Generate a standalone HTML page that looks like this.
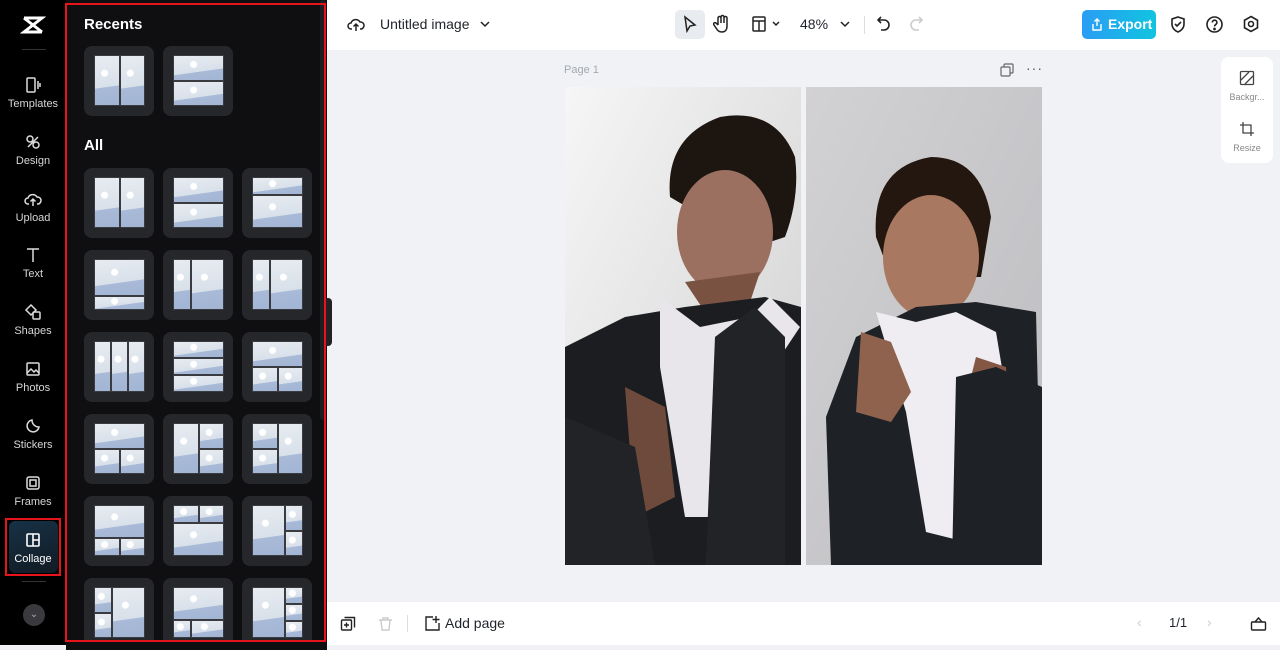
<!DOCTYPE html>
<html><head><meta charset="utf-8"><style>
*{box-sizing:border-box;margin:0;padding:0}
body{width:1280px;height:645px;overflow:hidden;font-family:"Liberation Sans",sans-serif;background:#f0f2f5;position:relative}
.rail{position:absolute;left:0;top:0;width:66px;height:645px;background:#000}
.ri{position:absolute;left:0;width:66px;text-align:center;color:#d6d6d8;font-size:11px}
.ri svg{display:block;margin:0 auto 4px}
.panel{position:absolute;left:66px;top:0;width:261px;height:645px;background:#0f0f12}
.red{position:absolute;border:2px solid #e8141c}
.h{position:absolute;left:84px;color:#fff;font-weight:bold;font-size:15px}
.card{position:absolute;width:70px;height:70px;background:#26272b;border-radius:8px}
.img{position:absolute;left:10px;top:9px;width:51px;height:51px;background:#3a3b40;display:grid;gap:2px;padding:1px}
.c{background:radial-gradient(circle at 40% 35%,#fff 0,#fff 3px,transparent 4px),linear-gradient(172deg,#e7ecf1 0%,#d8e0ea 62%,#a8bad7 63%,#a2b5d4 100%)}
.top{position:absolute;left:327px;top:0;width:953px;height:50px;background:#fff}
.bot{position:absolute;left:327px;top:602px;width:953px;height:43px;background:#fff}
.t{position:absolute;font-size:14px;color:#1f2329}
</style></head><body>
<div class="rail">
 <div class="ri" style="top:12px"><svg width="26" height="26" viewBox="0 0 26 26"><path d="M4 6h18L4 20h18" stroke="#fff" stroke-width="3" fill="none"/><path d="M4 6L22 20" stroke="#fff" stroke-width="3"/></svg></div>
 <div style="position:absolute;left:22px;top:49px;width:24px;height:1px;background:#333"></div>
 <div class="ri" style="top:76px"><svg width="18" height="18" viewBox="0 0 18 18" fill="none" stroke="#ddd" stroke-width="1.5"><rect x="3" y="2" width="8" height="14" rx="1"/><path d="M14 5v8M16 7v4"/></svg>Templates</div>
 <div class="ri" style="top:133px"><svg width="18" height="18" viewBox="0 0 18 18" fill="none" stroke="#ddd" stroke-width="1.5"><circle cx="6" cy="6" r="3"/><circle cx="12" cy="12" r="3"/><path d="M4 14L14 4"/></svg>Design</div>
 <div class="ri" style="top:190px"><svg width="18" height="18" viewBox="0 0 18 18" fill="none" stroke="#ddd" stroke-width="1.5"><path d="M5 14H4a3 3 0 010-6 5 5 0 019-1 3.5 3.5 0 011 7h-1M9 16V9M6.5 11.5L9 9l2.5 2.5"/></svg>Upload</div>
 <div class="ri" style="top:246px"><svg width="18" height="18" viewBox="0 0 18 18" fill="none" stroke="#ddd" stroke-width="1.5"><path d="M3 3h12M9 3v13"/></svg>Text</div>
 <div class="ri" style="top:303px"><svg width="18" height="18" viewBox="0 0 18 18" fill="none" stroke="#ddd" stroke-width="1.5"><path d="M7 2l5 5-5 5-5-5z"/><rect x="9" y="9" width="7" height="7" rx="1"/></svg>Shapes</div>
 <div class="ri" style="top:360px"><svg width="18" height="18" viewBox="0 0 18 18" fill="none" stroke="#ddd" stroke-width="1.5"><rect x="3" y="3" width="12" height="12" rx="1"/><path d="M3 13l4-4 3 3 2-2 3 3"/></svg>Photos</div>
 <div class="ri" style="top:417px"><svg width="18" height="18" viewBox="0 0 18 18" fill="none" stroke="#ddd" stroke-width="1.5"><path d="M15 10A6 6 0 118 3c0 4 3 7 7 7z"/></svg>Stickers</div>
 <div class="ri" style="top:474px"><svg width="18" height="18" viewBox="0 0 18 18" fill="none" stroke="#ddd" stroke-width="1.5"><rect x="3" y="3" width="12" height="12" rx="2"/><rect x="6" y="6" width="6" height="6"/></svg>Frames</div>
 <div style="position:absolute;left:9px;top:521px;width:49px;height:52px;border-radius:6px;background:linear-gradient(160deg,#173246,#111a24)"></div>
 <div class="ri" style="top:531px;color:#fff"><svg width="18" height="18" viewBox="0 0 18 18" fill="none" stroke="#fff" stroke-width="1.6"><rect x="3" y="3" width="12" height="12" rx="1"/><path d="M9 3v12M9 9h6"/></svg>Collage</div>
 <div class="red" style="left:5px;top:518px;width:56px;height:58px"></div>
 <div style="position:absolute;left:22px;top:581px;width:24px;height:1px;background:#333"></div>
 <div style="position:absolute;left:23px;top:604px;width:22px;height:22px;border-radius:50%;background:#3a3a3e;color:#aaa;font-size:10px;text-align:center;line-height:22px">⌄</div>
</div>
<div class="panel"></div>
<div style="position:absolute;left:320px;top:0;width:6px;height:420px;background:#1e1e22;border-radius:3px"></div>
<div style="position:absolute;left:324px;top:298px;width:8px;height:48px;background:#222;border-radius:4px"></div>
<div class="h" style="top:16px">Recents</div>
<div class="h" style="top:137px">All</div>

<div class="card" style="left:84px;top:46px"><div class="img" style="grid-template-columns:1fr 1fr"><div class="c"></div><div class="c"></div></div></div>
<div class="card" style="left:163px;top:46px"><div class="img" style="grid-template-rows:1fr 1fr"><div class="c"></div><div class="c"></div></div></div>

<div class="card" style="left:84px;top:168px"><div class="img" style="grid-template-columns:1fr 1fr"><div class="c"></div><div class="c"></div></div></div>
<div class="card" style="left:163px;top:168px"><div class="img" style="grid-template-rows:1fr 1fr"><div class="c"></div><div class="c"></div></div></div>
<div class="card" style="left:242px;top:168px"><div class="img" style="grid-template-rows:1fr 2fr"><div class="c"></div><div class="c"></div></div></div>

<div class="card" style="left:84px;top:250px"><div class="img" style="grid-template-rows:3fr 1fr"><div class="c"></div><div class="c"></div></div></div>
<div class="card" style="left:163px;top:250px"><div class="img" style="grid-template-columns:1fr 2fr"><div class="c"></div><div class="c"></div></div></div>
<div class="card" style="left:242px;top:250px"><div class="img" style="grid-template-columns:1fr 2fr"><div class="c"></div><div class="c"></div></div></div>

<div class="card" style="left:84px;top:332px"><div class="img" style="grid-template-columns:1fr 1fr 1fr"><div class="c"></div><div class="c"></div><div class="c"></div></div></div>
<div class="card" style="left:163px;top:332px"><div class="img" style="grid-template-rows:1fr 1fr 1fr"><div class="c"></div><div class="c"></div><div class="c"></div></div></div>
<div class="card" style="left:242px;top:332px"><div class="img" style="grid-template-columns:1fr 1fr;grid-template-rows:1fr 1fr"><div class="c" style="grid-column:1/3"></div><div class="c"></div><div class="c"></div></div></div>

<div class="card" style="left:84px;top:414px"><div class="img" style="grid-template-columns:1fr 1fr;grid-template-rows:1fr 1fr"><div class="c" style="grid-column:1/3"></div><div class="c"></div><div class="c"></div></div></div>
<div class="card" style="left:163px;top:414px"><div class="img" style="grid-template-columns:1fr 1fr;grid-template-rows:1fr 1fr"><div class="c" style="grid-row:1/3"></div><div class="c"></div><div class="c"></div></div></div>
<div class="card" style="left:242px;top:414px"><div class="img" style="grid-template-columns:1fr 1fr;grid-template-rows:1fr 1fr"><div class="c"></div><div class="c" style="grid-row:1/3;grid-column:2"></div><div class="c"></div></div></div>

<div class="card" style="left:84px;top:496px"><div class="img" style="grid-template-columns:1fr 1fr;grid-template-rows:2fr 1fr"><div class="c" style="grid-column:1/3"></div><div class="c"></div><div class="c"></div></div></div>
<div class="card" style="left:163px;top:496px"><div class="img" style="grid-template-columns:1fr 1fr;grid-template-rows:1fr 2fr"><div class="c"></div><div class="c"></div><div class="c" style="grid-column:1/3"></div></div></div>
<div class="card" style="left:242px;top:496px"><div class="img" style="grid-template-columns:2fr 1fr;grid-template-rows:1fr 1fr"><div class="c" style="grid-row:1/3"></div><div class="c"></div><div class="c"></div></div></div>

<div class="card" style="left:84px;top:578px"><div class="img" style="grid-template-columns:1fr 2fr;grid-template-rows:1fr 1fr"><div class="c"></div><div class="c" style="grid-row:1/3;grid-column:2"></div><div class="c"></div></div></div>
<div class="card" style="left:163px;top:578px"><div class="img" style="grid-template-columns:1fr 2fr;grid-template-rows:2fr 1fr"><div class="c" style="grid-column:1/3"></div><div class="c"></div><div class="c"></div></div></div>
<div class="card" style="left:242px;top:578px"><div class="img" style="grid-template-columns:2fr 1fr;grid-template-rows:1fr 1fr 1fr"><div class="c" style="grid-row:1/4"></div><div class="c"></div><div class="c"></div><div class="c"></div></div></div>
<div style="position:absolute;left:66px;top:640px;width:261px;height:10px;background:#0f0f12"></div>
<div class="red" style="left:65px;top:3px;width:261px;height:639px"></div>

<div class="top"></div>
<svg style="position:absolute;left:347px;top:15px" width="18" height="18" viewBox="0 0 18 18" fill="none" stroke="#222" stroke-width="1.5"><path d="M5 14H4a3 3 0 010-6 5 5 0 019-1 3.5 3.5 0 011 7h-1M9 16V9M6.5 11.5L9 9l2.5 2.5"/></svg>
<div class="t" style="left:380px;top:16px">Untitled image</div>
<svg style="position:absolute;left:480px;top:19px" width="10" height="10" viewBox="0 0 10 10" fill="none" stroke="#222" stroke-width="1.5"><path d="M1 3l4 4 4-4"/></svg>
<div style="position:absolute;left:675px;top:10px;width:30px;height:29px;background:#e8ebef;border-radius:5px"></div>
<svg style="position:absolute;left:682px;top:15px" width="16" height="18" viewBox="0 0 16 18" fill="none" stroke="#222" stroke-width="1.5"><path d="M3 2l10 8-5 1-3 5z"/></svg>
<svg style="position:absolute;left:713px;top:14px" width="18" height="20" viewBox="0 0 18 20" fill="none" stroke="#222" stroke-width="1.5"><path d="M5 11V4a1.5 1.5 0 013 0v5V3a1.5 1.5 0 013 0v6V4a1.5 1.5 0 013 0v8c0 4-2 6-5 6s-4-1-6-4l-2-3a1.4 1.4 0 012-2l2 2"/></svg>
<svg style="position:absolute;left:752px;top:16px" width="32" height="16" viewBox="0 0 32 16" fill="none" stroke="#222" stroke-width="1.5"><rect x="1" y="1" width="12" height="14" rx="1"/><path d="M1 5h12M7 5v10M21 6l3 3 3-3"/></svg>
<div class="t" style="left:800px;top:16px">48%</div>
<svg style="position:absolute;left:840px;top:19px" width="10" height="10" viewBox="0 0 10 10" fill="none" stroke="#222" stroke-width="1.5"><path d="M1 3l4 4 4-4"/></svg>
<div style="position:absolute;left:864px;top:16px;width:1px;height:18px;background:#ddd"></div>
<svg style="position:absolute;left:876px;top:15px" width="16" height="18" viewBox="0 0 16 18" fill="none" stroke="#222" stroke-width="1.6"><path d="M5 2L2 5l3 3M2 5h6a5 5 0 010 10H5"/></svg>
<svg style="position:absolute;left:908px;top:15px" width="16" height="18" viewBox="0 0 16 18" fill="none" stroke="#ccc" stroke-width="1.6"><path d="M11 2l3 3-3 3M14 5H8a5 5 0 000 10h3"/></svg>
<div style="position:absolute;left:1082px;top:10px;width:74px;height:29px;border-radius:5px;background:linear-gradient(90deg,#2a9df4,#10c4e0);color:#fff;font-size:14px;font-weight:bold;line-height:29px;padding-left:26px">Export</div>
<svg style="position:absolute;left:1090px;top:17px" width="14" height="15" viewBox="0 0 14 15" fill="none" stroke="#fff" stroke-width="1.4"><path d="M7 9V2M4.5 4.5L7 2l2.5 2.5M3 7v6h8V7"/></svg>
<svg style="position:absolute;left:1169px;top:15px" width="18" height="19" viewBox="0 0 18 19" fill="none" stroke="#222" stroke-width="1.6"><path d="M9 2l6 2v5c0 4-3 7-6 8-3-1-6-4-6-8V4z"/><path d="M6 9l2 2 4-4"/></svg>
<svg style="position:absolute;left:1205px;top:15px" width="19" height="19" viewBox="0 0 19 19" fill="none" stroke="#222" stroke-width="1.6"><circle cx="9.5" cy="9.5" r="7.5"/><path d="M7.3 7.5a2.3 2.3 0 114 1.5c-1 .8-1.8 1.2-1.8 2.5"/><circle cx="9.5" cy="14" r=".6" fill="#222"/></svg>
<svg style="position:absolute;left:1242px;top:15px" width="18" height="19" viewBox="0 0 18 19" fill="none" stroke="#222" stroke-width="1.6"><path d="M9 1.5l6.5 3.75v7.5L9 16.5l-6.5-3.75v-7.5z"/><circle cx="9" cy="9" r="2.5"/></svg>

<div style="position:absolute;left:564px;top:64px;font-size:11px;color:#a4a9b0">Page 1</div>
<svg style="position:absolute;left:1000px;top:63px" width="14" height="14" viewBox="0 0 14 14" fill="none" stroke="#666" stroke-width="1.2"><rect x="4" y="1" width="9" height="9" rx="1"/><rect x="1" y="4" width="9" height="9" rx="1" fill="#f0f2f5"/></svg>
<div style="position:absolute;left:1026px;top:60px;font-size:14px;color:#555;letter-spacing:1px">···</div>

<svg style="position:absolute;left:565px;top:87px" width="236" height="478" viewBox="0 0 236 478">
<defs><linearGradient id="bg1" x1="0" y1="0" x2="1" y2="1"><stop offset="0" stop-color="#f6f6f6"/><stop offset="1" stop-color="#cfcfcf"/></linearGradient></defs>
<rect width="236" height="478" fill="url(#bg1)"/>
<path d="M105 110q-5-60 50-80 55-10 75 40 5 40-10 80l-30 10z" fill="#1d1510"/>
<ellipse cx="160" cy="145" rx="48" ry="62" fill="#9c7060"/>
<path d="M120 195l20 30 45-10 10-30z" fill="#7a5242"/>
<path d="M0 260l60-30 60-10 80-10 36 10v258H0z" fill="#1c1d20"/>
<path d="M95 210l40 30 50-10 20-20 30 30-40 60-30 130-45 0-25-150z" fill="#e8e6ea"/>
<path d="M150 250l40-30 30 30v250h-80z" fill="#222326"/>
<path d="M60 300l40 20 10 90-40 20z" fill="#6e4a3c"/>
<path d="M0 330l70 30 20 118H0z" fill="#222326"/>
</svg>
<svg style="position:absolute;left:806px;top:87px" width="236" height="478" viewBox="0 0 236 478">
<defs><linearGradient id="bg2" x1="0" y1="0" x2="1" y2="1"><stop offset="0" stop-color="#d2d1d3"/><stop offset="1" stop-color="#bdbcc0"/></linearGradient></defs>
<rect width="236" height="478" fill="url(#bg2)"/>
<path d="M70 150q-5-70 55-80 50 0 60 60l-10 60-90 0z" fill="#24170f"/>
<ellipse cx="125" cy="170" rx="48" ry="62" fill="#a87860"/>
<path d="M20 330l30-80 60-30 60-5 60 10 6 253H25z" fill="#1e2126"/>
<path d="M70 225l40 10 40-10 40 20 10 60-40 150-40-10-20-120z" fill="#efedf2"/>
<path d="M55 245l30 10 20 50-20 30-35-10z" fill="#8e624c"/>
<path d="M170 270l30 10 5 80-35 10-10-60z" fill="#835744"/>
<path d="M150 290l40-10 46 20v178h-90z" fill="#1e2126"/>
</svg>

<div style="position:absolute;left:1221px;top:57px;width:52px;height:106px;background:#fff;border-radius:8px"></div>
<svg style="position:absolute;left:1239px;top:70px" width="16" height="16" viewBox="0 0 16 16" fill="none" stroke="#444" stroke-width="1.3"><rect x="1.5" y="1.5" width="13" height="13" rx="1"/><path d="M2 10l8-8M6 14l8-8"/></svg>
<div style="position:absolute;left:1221px;top:92px;width:52px;text-align:center;font-size:9px;color:#888">Backgr...</div>
<svg style="position:absolute;left:1239px;top:121px" width="16" height="16" viewBox="0 0 16 16" fill="none" stroke="#444" stroke-width="1.3"><path d="M4 1v11h11M1 4h11v11"/></svg>
<div style="position:absolute;left:1221px;top:143px;width:52px;text-align:center;font-size:9px;color:#888">Resize</div>

<div class="bot"></div>
<svg style="position:absolute;left:340px;top:616px" width="16" height="16" viewBox="0 0 16 16" fill="none" stroke="#222" stroke-width="1.4"><rect x="1.5" y="4" width="10" height="10" rx="1"/><path d="M4.5 1.5h10v10M6.5 6.5v5M4 9h5"/></svg>
<svg style="position:absolute;left:378px;top:616px" width="15" height="16" viewBox="0 0 15 16" fill="none" stroke="#ccc" stroke-width="1.4"><path d="M1 4h13M5 4V2h5v2M3 4l1 10h7l1-10"/></svg>
<div style="position:absolute;left:407px;top:615px;width:1px;height:17px;background:#ddd"></div>
<svg style="position:absolute;left:424px;top:615px" width="17" height="17" viewBox="0 0 17 17" fill="none" stroke="#222" stroke-width="1.4"><path d="M9 2H2v13h13V8M12 1v7M8.5 4.5h7"/></svg>
<div class="t" style="left:445px;top:615px">Add page</div>
<div style="position:absolute;left:1137px;top:614px;font-size:14px;color:#ccc">‹</div>
<div class="t" style="left:1169px;top:615px;font-size:13px">1/1</div>
<div style="position:absolute;left:1207px;top:614px;font-size:14px;color:#ccc">›</div>
<svg style="position:absolute;left:1250px;top:615px" width="17" height="17" viewBox="0 0 17 17" fill="none" stroke="#222" stroke-width="1.4"><rect x="1.5" y="7" width="14" height="8" rx="1"/><path d="M5 7l3.5-4L12 7"/></svg>
</body></html>
